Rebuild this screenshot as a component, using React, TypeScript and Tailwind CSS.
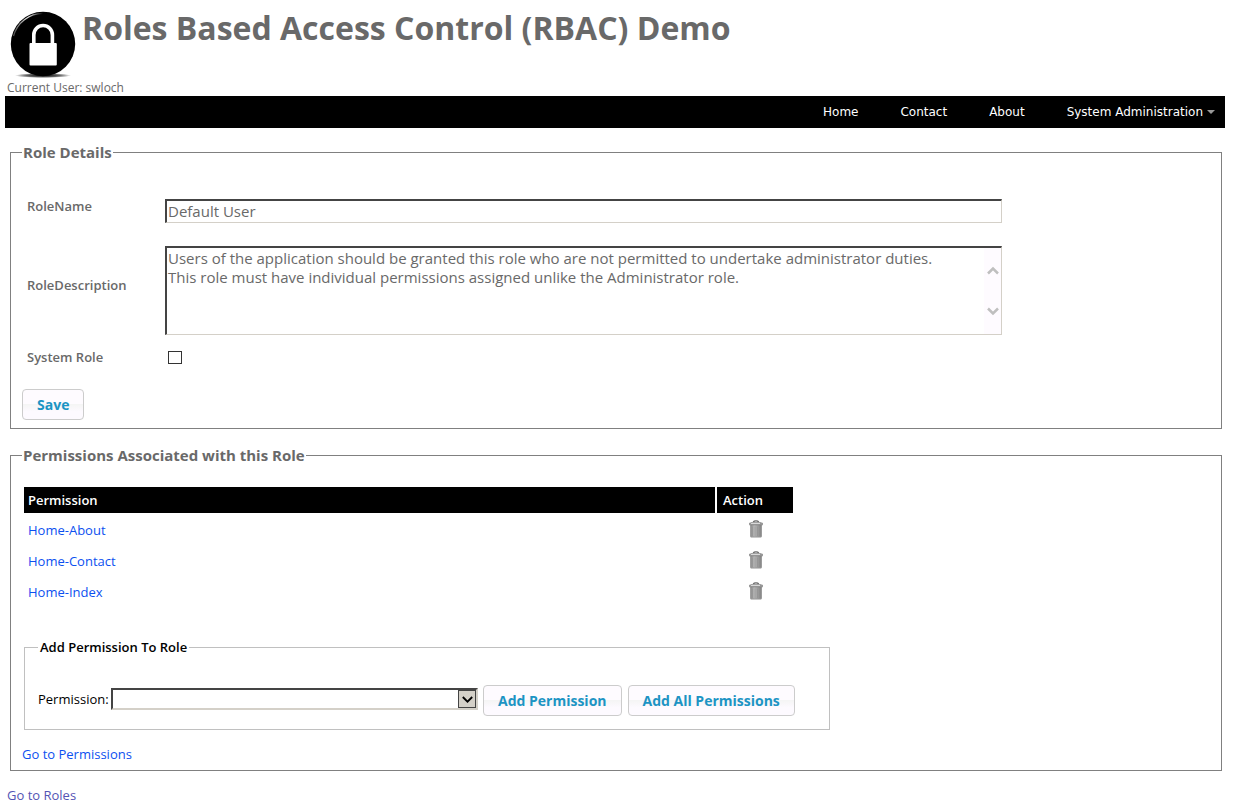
import { useState } from "react";
import type { ReactNode } from "react";

const permissions = ["Home-About", "Home-Contact", "Home-Index"];

function LockLogo() {
  return (
    <svg viewBox="0 0 70 70" className="h-[70px] w-[70px]" role="img" aria-label="RBAC Demo">
      <defs>
        <radialGradient id="logoShadow">
          <stop offset="0" stopColor="#000" stopOpacity="1" />
          <stop offset="0.6" stopColor="#000" stopOpacity="0.6" />
          <stop offset="1" stopColor="#000" stopOpacity="0" />
        </radialGradient>
        <linearGradient id="logoShine" x1="0" y1="0" x2="1" y2="0">
          <stop offset="0" stopColor="#fff" stopOpacity="0.3" />
          <stop offset="0.5" stopColor="#fff" stopOpacity="0.9" />
          <stop offset="1" stopColor="#fff" stopOpacity="0" />
        </linearGradient>
      </defs>
      <ellipse cx="35" cy="66.500" rx="28" ry="2.500" fill="url(#logoShadow)" />
      <circle cx="35" cy="35" r="32.200" fill="#000" />
      <path d="M5.500 27A30.600 30.600 0 0 1 35 4.400" fill="none" stroke="url(#logoShine)" strokeWidth="1.300" />
      <path d="M25.800 36V26a9.300 9.500 0 0 1 18.600 0v10" fill="none" stroke="#fff" strokeWidth="3.600" />
      <rect x="21.500" y="34" width="27.300" height="22.500" rx="1" fill="#fff" />
    </svg>
  );
}

function TrashIcon() {
  return (
    <svg viewBox="0 0 14 18" className="h-[18px] w-[14px]" aria-hidden="true">
      <defs>
        <linearGradient id="canBody" x1="0" x2="1" y1="0" y2="0">
          <stop offset="0" stopColor="#858585" />
          <stop offset="0.350" stopColor="#b8b8b8" />
          <stop offset="1" stopColor="#808080" />
        </linearGradient>
      </defs>
      <path d="M4.200 2Q5 .800 7 .800T9.800 2" fill="none" stroke="#666" strokeWidth="1.300" />
      <path d="M1.200 4.500h11.600v12.300H1.200z" fill="url(#canBody)" />
      <path d="M1.700 17h10.600" stroke="#777" strokeWidth="0.800" />
      <path d="M3.500 6.500v9.500M6 6.500v9.500M8.500 6.500v9.500M11 6.500v9.500" stroke="#8c8c8c" strokeWidth="0.500" />
      <path d="M0 3.800h14" stroke="#999" strokeWidth="2" />
      <path d="M1.500 2.600h11" stroke="#858585" strokeWidth="0.800" />
      <path d="M2 3.500h9" stroke="#d8d8d8" strokeWidth="1" />
      <path d="M0.300 4.900h13.400" stroke="#777" strokeWidth="0.600" />
    </svg>
  );
}

function Button({ children }: { children: ReactNode }) {
  return (
    <button
      type="button"
      className="h-[31px] shrink-0 cursor-pointer rounded-[4px] border border-[#cccccc] bg-[linear-gradient(#fefbff_50%,#f5f5f5_50%,#fdfaff_75%)] px-3.5 text-[14px] leading-[21px] font-bold whitespace-nowrap text-[#1c94c4]"
    >
      {children}
    </button>
  );
}

const labelClass = "pl-[5px] text-[13px] leading-[14px] font-semibold";
const inputClass =
  "block w-full border-t-2 border-r border-b border-l-2 border-t-[#444] border-r-[#d4d0c8] border-b-[#d4d0c8] border-l-[#444] bg-white pl-px text-[#696969] outline-none";

export default function App() {
  const [name, setName] = useState("Default User");
  const [description, setDescription] = useState(
    "Users of the application should be granted this role who are not permitted to undertake administrator duties.\nThis role must have individual permissions assigned unlike the Administrator role."
  );

  return (
    <div className="bg-white pr-[10px] pl-[5px] font-['Open_Sans','Noto_Sans',sans-serif] text-[13px] leading-4 text-[#696969]">
      <header className="pt-[9px]">
        <div className="flex gap-1 pl-[3px]">
          <LockLogo />
          <h1 className="text-[32px] leading-[38px] font-bold">Roles Based Access Control (RBAC) Demo</h1>
        </div>
        <p className="pt-px pl-0.5 text-[12px]">Current User: swloch</p>
      </header>

      <nav className="flex h-8 items-center justify-end gap-[42px] bg-black pr-[10px] font-['DejaVu_Sans',sans-serif] text-[12px] text-white">
        <a href="#home">Home</a>
        <a href="#contact">Contact</a>
        <a href="#about">About</a>
        <a href="#administration" className="flex items-center gap-1">
          System Administration
          <svg viewBox="0 0 8 4" className="h-1 w-2" aria-hidden="true">
            <path d="M0 0h8L4 4z" fill="#999" />
          </svg>
        </a>
      </nav>

      <main className="pr-[3px] pl-[5px]">
        <fieldset className="mt-[14px] border border-[#808080] px-[11px] pb-2">
          <legend className="px-px text-[15px] leading-5 font-bold">Role Details</legend>
          <div className="grid grid-cols-[143px_minmax(0,837px)] pt-[37px]">
            <label htmlFor="role-name" className={labelClass}>
              RoleName
            </label>
            <input
              id="role-name"
              value={name}
              onChange={(e) => setName(e.target.value)}
              className={inputClass + " mb-[23px] h-6 pb-0.5 text-[15px] leading-[19px]"}
            />
            <label htmlFor="role-description" className={labelClass + " flex h-[89px] items-center pb-3"}>
              RoleDescription
            </label>
            <div className="relative mb-3">
              <textarea
                id="role-description"
                value={description}
                onChange={(e) => setDescription(e.target.value)}
                className={inputClass + " h-[89px] resize-none overflow-hidden pt-px pr-5 text-[15px] leading-[19px]"}
              />
              <div className="pointer-events-none absolute top-0.5 right-px bottom-px flex w-[17px] flex-col items-center justify-center gap-8 bg-[#fefbff]">
                <svg viewBox="0 0 12 9" className="h-[9px] w-3" aria-hidden="true">
                  <path d="M1 7.500L6 2.500l5 5" fill="none" stroke="#bfbfbf" strokeWidth="2.500" />
                </svg>
                <svg viewBox="0 0 12 9" className="h-[9px] w-3" aria-hidden="true">
                  <path d="M1 1.500l5 5 5-5" fill="none" stroke="#bfbfbf" strokeWidth="2.500" />
                </svg>
              </div>
            </div>
            <label htmlFor="system-role" className={labelClass + " pt-[3px]"}>
              System Role
            </label>
            <div className="h-[30px] pt-1 pl-[3px]">
              <input
                id="system-role"
                type="checkbox"
                className="block h-[13px] w-3.5 appearance-none border border-[#333] bg-white checked:bg-[#333]"
              />
            </div>
          </div>
          <div className="mt-3 flex">
            <Button>Save</Button>
          </div>
        </fieldset>

        <fieldset className="mt-4 border border-[#808080] px-[11px]">
          <legend className="px-px text-[15px] leading-5 font-bold">Permissions Associated with this Role</legend>
          <table className="mt-5 w-full max-w-[773px] table-fixed border-separate border-spacing-[2px] text-left">
            <thead>
              <tr className="h-[26px] bg-black text-white">
                <th className="px-1 py-0 font-semibold">Permission</th>
                <th className="w-[76px] px-1.5 py-0 font-semibold">Action</th>
              </tr>
            </thead>
            <tbody>
              {permissions.map((permission) => (
                <tr key={permission} className="h-[29px]">
                  <td className="px-1 py-0">
                    <a href="#permission" className="text-[#0c50f0]">
                      {permission}
                    </a>
                  </td>
                  <td className="p-0 pb-0.5 pl-0.5">
                    <button type="button" aria-label={"Delete " + permission} className="mx-auto block cursor-pointer">
                      <TrashIcon />
                    </button>
                  </td>
                </tr>
              ))}
            </tbody>
          </table>

          <fieldset className="mt-[31px] ml-0.5 max-w-[806px] border border-[#c0c0c0] px-[13px] pb-[13px] text-black">
            <legend className="px-0.5 font-semibold">Add Permission To Role</legend>
            <div className="flex items-start pt-[30px]">
              <label htmlFor="permission" className="w-[73px] shrink-0 pt-1.5 whitespace-nowrap">
                Permission:
              </label>
              <div className="relative min-w-0 flex-1 grow-0 basis-[367px] pt-[3px]">
                <select
                  id="permission"
                  className="block h-[22px] w-full appearance-none border-2 border-t-[#444] border-r-[#d4d0c8] border-b-[#d4d0c8] border-l-[#444] bg-white px-1 outline-none"
                >
                  <option value=""></option>
                  <option>Admin-Index</option>
                </select>
                <span className="pointer-events-none absolute top-[5px] right-0.5 bottom-0.5 flex w-[18px] items-center justify-center border border-[#444] bg-[#d4d0c8]">
                  <svg viewBox="0 0 11 7" className="h-[7px] w-[11px]" aria-hidden="true">
                    <path d="M.8 1L5.500 5.700 10.200 1" fill="none" stroke="#000" strokeWidth="1.800" />
                  </svg>
                </span>
              </div>
              <div className="ml-[5px] flex gap-1.5">
                <Button>Add Permission</Button>
                <Button>Add All Permissions</Button>
              </div>
            </div>
          </fieldset>
          <p className="mt-4 pb-2">
            <a href="#permissions" className="text-[#0c50f0]">
              Go to Permissions
            </a>
          </p>
        </fieldset>
      </main>
      <p className="mt-4 pl-0.5">
        <a href="#roles" className="text-[#5454b4]">
          Go to Roles
        </a>
      </p>
    </div>
  );
}
